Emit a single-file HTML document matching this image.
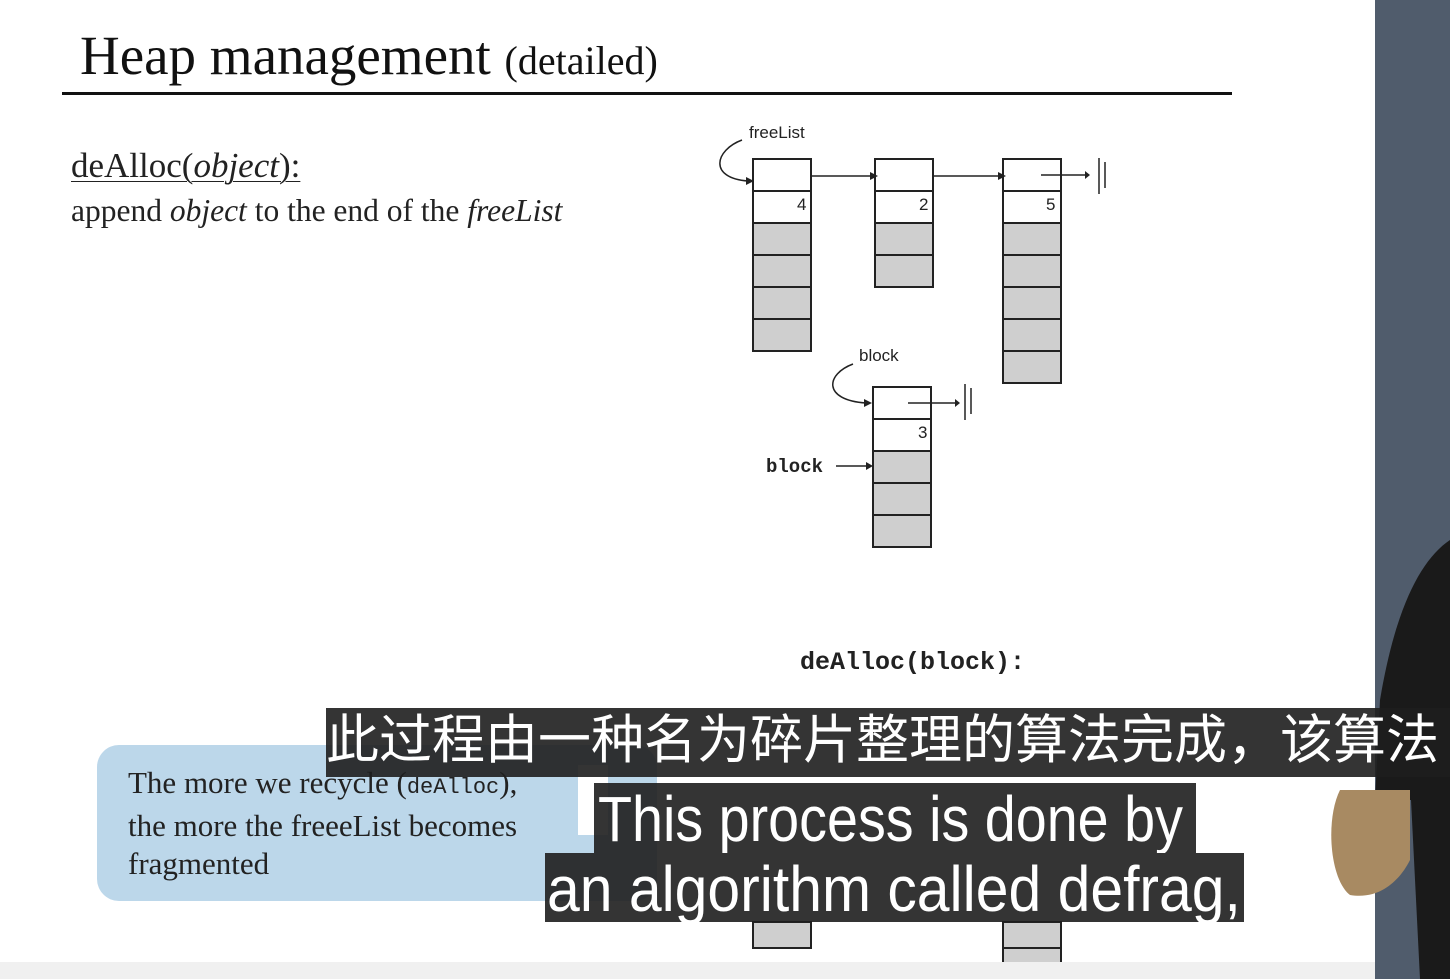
<!DOCTYPE html>
<html><head><meta charset="utf-8"><style>
body{margin:0;width:1450px;height:979px;overflow:hidden;background:#fff;position:relative;font-family:"Liberation Serif",serif}
.a{position:absolute;white-space:nowrap}
.sub{position:absolute;background:rgba(30,30,30,0.9);color:#fff;font-family:"Liberation Sans","Noto Sans CJK SC",sans-serif;white-space:nowrap;line-height:1;overflow:hidden}
.sub span{display:inline-block;transform-origin:0 0}
</style></head><body>
<div class="a" style="left:80px;top:24px;font-size:55px;color:#111">Heap management <span style="font-size:40px">(detailed)</span></div>
<div class="a" style="left:62px;top:92px;width:1170px;height:3px;background:#111"></div>
<div class="a" style="left:71px;top:146px;font-size:35px;color:#222;text-decoration:underline;text-decoration-thickness:1px;text-underline-offset:4px">deAlloc(<i>object</i>):</div>
<div class="a" style="left:71px;top:193px;font-size:31.5px;color:#222">append <i>object</i> to the end of the <i>freeList</i></div>
<div class="a" style="left:97px;top:745px;width:560px;height:156px;background:#bcd7ea;border-radius:22px"></div>
<div class="a" style="left:578px;top:765px;width:30px;height:70px;background:#fff"></div>
<div class="a" style="left:128px;top:764px;font-size:31px;line-height:38px;color:#222">The more we recycle (<span style="font-family:'Liberation Mono',monospace;font-size:22px">deAlloc</span>),<br>the more the freeeList becomes<br>fragmented</div>
<svg class="a" style="left:0;top:0" width="1450" height="979">
<g stroke="#222" stroke-width="2" font-family="Liberation Sans,sans-serif">
<g fill="#fff"><rect x="753" y="159" width="58" height="32"/><rect x="753" y="191" width="58" height="32"/>
<rect x="875" y="159" width="58" height="32"/><rect x="875" y="191" width="58" height="32"/>
<rect x="1003" y="159" width="58" height="32"/><rect x="1003" y="191" width="58" height="32"/>
<rect x="873" y="387" width="58" height="32"/><rect x="873" y="419" width="58" height="32"/></g>
<g fill="#cfcfcf">
<rect x="753" y="223" width="58" height="32"/><rect x="753" y="255" width="58" height="32"/><rect x="753" y="287" width="58" height="32"/><rect x="753" y="319" width="58" height="32"/>
<rect x="875" y="223" width="58" height="32"/><rect x="875" y="255" width="58" height="32"/>
<rect x="1003" y="223" width="58" height="32"/><rect x="1003" y="255" width="58" height="32"/><rect x="1003" y="287" width="58" height="32"/><rect x="1003" y="319" width="58" height="32"/><rect x="1003" y="351" width="58" height="32"/>
<rect x="873" y="451" width="58" height="32"/><rect x="873" y="483" width="58" height="32"/><rect x="873" y="515" width="58" height="32"/>
<rect x="753" y="922" width="58" height="26"/><rect x="1003" y="922" width="58" height="26"/><rect x="1003" y="948" width="58" height="31"/>
</g>
<g fill="none" stroke-width="1.5">
<path d="M811 176H870M933 176H998M1041 175H1085M908 403H955M836 466H868"/>
<path d="M742 140C715 150 708 178 748 181M853 364C826 374 822 400 866 403"/>
<path d="M1099 158V194M1105 162V188M965 384V420M971 388V414"/>
</g>
<g fill="#222" stroke="none">
<path d="M870 172L878 176L870 180ZM998 172L1006 176L998 180ZM1085 171L1090 175L1085 179ZM955 399L960 403L955 407ZM866 462L873 466L866 470ZM746 177L754 181L746 185ZM864 399L872 403L864 407Z"/>
<g font-size="17"><text x="749" y="138">freeList</text><text x="859" y="361">block</text>
<text x="797" y="210">4</text><text x="919" y="210">2</text><text x="1046" y="210">5</text><text x="918" y="438">3</text></g>
<g font-family="Liberation Mono,monospace" font-weight="bold"><text x="766" y="472" font-size="19">block</text><text x="800" y="669" font-size="25">deAlloc(block):</text></g>
</g></g>
<rect x="1375" y="0" width="75" height="979" fill="#505c6c"/>
<path d="M1450 540C1420 560 1395 610 1380 700L1375 800L1450 800Z" fill="#1a1a1a"/>
<path d="M1340 790C1325 820 1330 880 1350 895C1380 900 1400 880 1410 860L1410 790Z" fill="#a88a62"/>
<path d="M1410 780H1450V979H1420Z" fill="#1a1a1a"/>
<rect x="0" y="962" width="1375" height="17" fill="#f0f0f0"/>
</svg>
<div class="sub" style="left:326px;top:708px;width:1124px;height:69px;font-size:53px;padding-top:6px;box-sizing:border-box">此过程由一种名为碎片整理的算法完成，该算法</div>
<div class="sub" style="left:594px;top:783px;width:602px;height:70px;font-size:64px;padding:4px 0 0 4px;box-sizing:border-box"><span style="transform:scaleX(0.87)">This process is done by</span></div>
<div class="sub" style="left:545px;top:853px;width:699px;height:69px;font-size:64px;padding:4px 0 0 2px;box-sizing:border-box"><span style="transform:scaleX(0.92)">an algorithm called defrag,</span></div>
</body></html>
